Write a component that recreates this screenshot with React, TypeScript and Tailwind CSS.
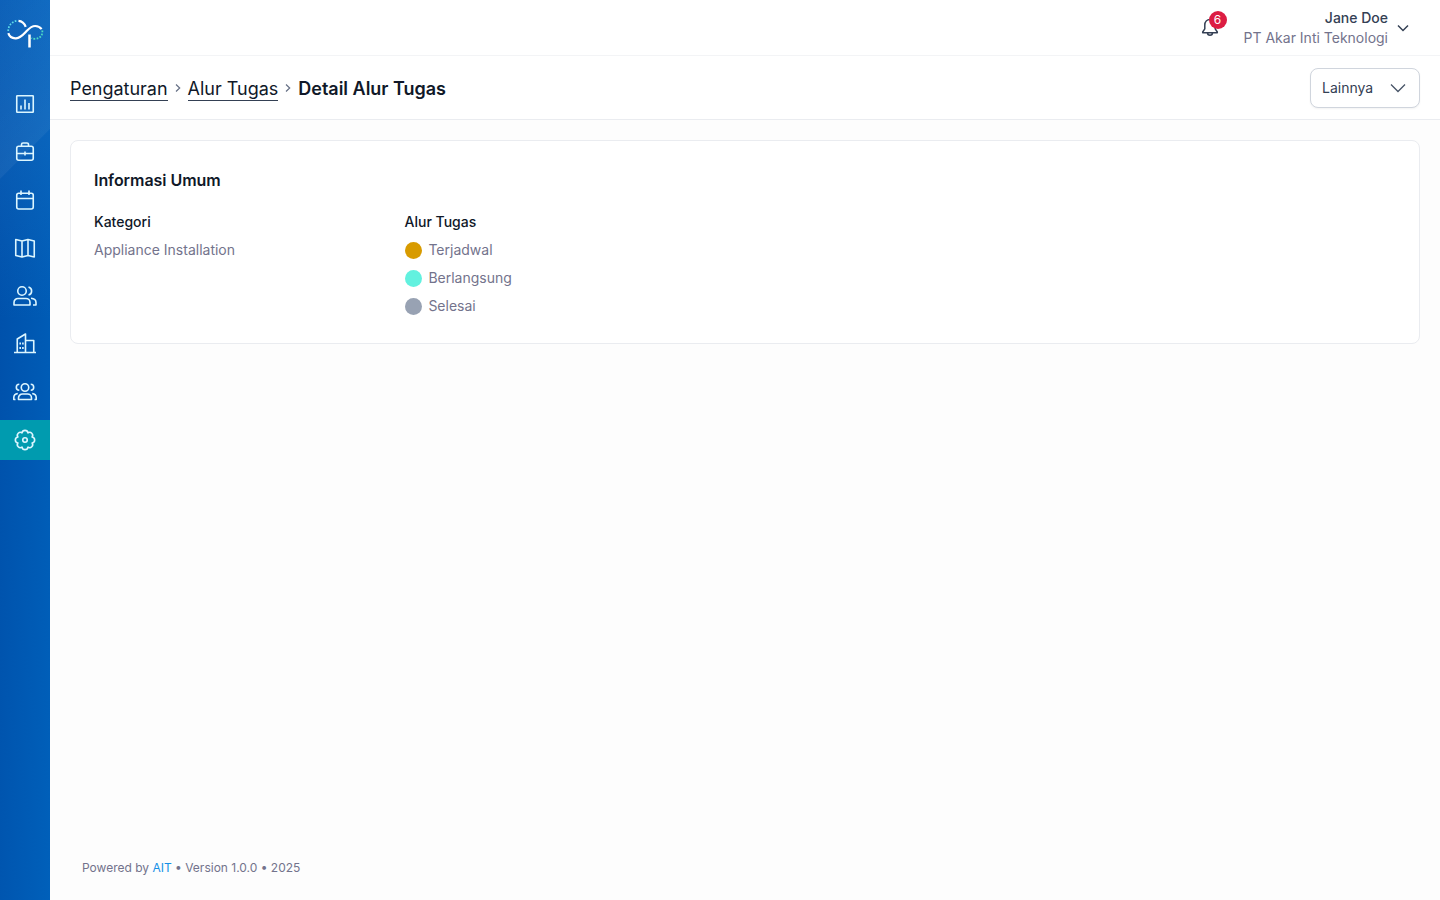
import type { ReactNode } from "react"

interface NavItem {
  id: string
  active?: boolean
  icon: ReactNode
}

const NAV_ITEMS: NavItem[] = [
  {
    id: "dashboard",
    icon: (
      <>
        <rect x="3.75" y="3.75" width="16.5" height="16.5" rx="0.5" />
        <path d="M8 13.5v4M12 7.5v10M16 11v6.5" />
      </>
    ),
  },
  {
    id: "jobs",
    icon: (
      <>
        <rect x="3.75" y="6.25" width="16.5" height="14" rx="2" />
        <path d="M8.5 6V4.5A1.5 1.5 0 0 1 10 3h4a1.5 1.5 0 0 1 1.5 1.5V6M3.75 13.5h16.5M12 11.5v4" />
      </>
    ),
  },
  {
    id: "calendar",
    icon: (
      <>
        <rect x="3.75" y="5.25" width="16.5" height="15.75" rx="2" />
        <path d="M8 2.5V7M16 2.5V7M3.75 10.5h16.5" />
      </>
    ),
  },
  {
    id: "map",
    icon: <path d="M2.75 3.5 9 5l6-1.5L21.25 5v16L15 19.5 9 21l-6.25-1.5ZM9 5v16M15 3.5v16" />,
  },
  {
    id: "customers",
    icon: (
      <>
        <circle cx="9" cy="7" r="4.25" />
        <path d="M15.5 2.9a4.25 4.25 0 0 1 0 8.2M5 14.5h8a4 4 0 0 1 4 4V21H1v-2.5a4 4 0 0 1 4-4ZM18 14.3c2.9.3 5 1.7 5 4.2V21h-3" />
      </>
    ),
  },
  {
    id: "assets",
    icon: (
      <>
        <path d="M1 20.5h22M4.25 20.5V7l8.25-5v18.5M12.5 8.5h8.25v12" />
        <path d="M7.2 10.5v2M9.9 10.5v2M7.2 15v2M9.9 15v2" />
      </>
    ),
  },
  {
    id: "teams",
    icon: (
      <>
        <circle cx="12" cy="7.5" r="3.75" />
        <path d="M9.5 14h5a4 4 0 0 1 4 4v1.5h-13V18a4 4 0 0 1 4-4Z" />
        <path d="M6.3 4.3a3 3 0 0 0 0 6M17.7 4.3a3 3 0 0 1 0 6M4.8 13.5c-2.4.4-4 1.9-4 4v2h1.7M19.2 13.5c2.4.4 4 1.9 4 4v2h-1.7" />
      </>
    ),
  },
  {
    id: "settings",
    active: true,
    icon: (
      <>
        <path d="M9.05 4.9a2.98 2.98 0 0 1 5.9 0 2.98 2.98 0 0 1 4.15 4.15 2.98 2.98 0 0 1 0 5.9 2.98 2.98 0 0 1-4.15 4.15 2.98 2.98 0 0 1-5.9 0 2.98 2.98 0 0 1-4.15-4.15 2.98 2.98 0 0 1 0-5.9 2.98 2.98 0 0 1 4.15-4.15Z" />
        <circle cx="12" cy="12" r="2.25" />
      </>
    ),
  },
]

const STEPS = [
  { name: "Terjadwal", color: "bg-[#d89b00]" },
  { name: "Berlangsung", color: "bg-[#62f1df]" },
  { name: "Selesai", color: "bg-[#98a2b3]" },
]

function Logo() {
  return (
    <svg width="50" height="36" viewBox="0 0 50 36" fill="none">
      <path d="M8.2 18c0-5.500 4-10 9.500-10.300" stroke="#5ddbe8" strokeWidth="1.7" strokeDasharray="1.7 1.4" />
      <path d="M18.5 7.8c3.4.3 5.9 2.5 7.2 6" stroke="#fff" strokeWidth="2.2" />
      <path d="M8.3 20.2c1.2 3.6 4.3 5.3 7.7 5.1 4.7-.2 7.6-4 10.9-7.5 2.6-2.8 5.3-4.8 8.3-4.8 2.6 0 4.8 1 6.4 3.2" stroke="#fff" strokeWidth="2.2" />
      <path d="M42.3 17.5c.6 5-2.6 8.3-7.3 8.3-1.5 0-2.5-.3-3.5-.9" stroke="#4cdbc4" strokeWidth="1.8" strokeDasharray="1.7 1.4" />
      <path d="M29.5 21.5v13" stroke="#fff" strokeWidth="2.5" />
    </svg>
  )
}

function Sidebar() {
  return (
    <aside className="flex w-[50px] shrink-0 flex-col bg-[linear-gradient(135deg,rgba(255,255,255,0)_0px,rgba(255,255,255,0.05)_126px,transparent_127px),linear-gradient(180deg,rgba(50,145,225,0.28)_0px,rgba(50,145,225,0.18)_140px,transparent_320px),linear-gradient(92deg,#004fa9_0%,#0060ba_100%)] pt-[13px]">
      <Logo />
      <nav className="mt-[35px] flex flex-col gap-2">
        {NAV_ITEMS.map((item) => (
          <a key={item.id} href="#" className={`flex h-10 items-center justify-center ${item.active ? "bg-[#009baf]" : ""}`}>
            <svg width="24" height="24" viewBox="0 0 24 24" fill="none" stroke="#dcf6ff" strokeWidth="1.6" strokeLinejoin="round">
              {item.icon}
            </svg>
          </a>
        ))}
      </nav>
    </aside>
  )
}

function Topbar() {
  return (
    <header className="flex h-14 items-center justify-end border-b border-[#f3f4f6] bg-white pr-[31px]">
      <button className="relative mr-[22px] h-6 w-6">
        <svg width="24" height="24" viewBox="0 0 24 24" fill="none" stroke="#344054" strokeWidth="1.5" strokeLinejoin="round">
          <path d="M12 3.5c-3 0-5.2 2.3-5.2 5.5v3.8L4.700 16v.8h14.600V16l-2.100-3.200V9c0-3.200-2.200-5.500-5.200-5.500ZM9.500 16.800a2.500 2.500 0 0 0 5 0" />
        </svg>
        <span className="absolute -top-[5px] left-[11px] flex h-[18px] w-[18px] items-center justify-center rounded-full bg-[#dc1d43] text-xs text-white">
          6
        </span>
      </button>
      <div className="text-right text-sm leading-5">
        <p className="font-medium text-[#344054]">Jane Doe</p>
        <p className="text-[#73738c]">PT Akar Inti Teknologi</p>
      </div>
      <svg className="ml-[9px]" width="12" height="12" viewBox="0 0 12 12" fill="none" stroke="#344054" strokeWidth="1.5">
        <path d="m1 3.5 5 5 5-5" />
      </svg>
    </header>
  )
}

function Separator() {
  return (
    <svg className="mx-[7px] mb-0.5" width="6" height="10" viewBox="0 0 6 10" fill="none" stroke="#667085" strokeWidth="1.2">
      <path d="m1 1.5 3.7 3.5L1 8.5" />
    </svg>
  )
}

function PageHeader() {
  return (
    <div className="flex h-16 items-center justify-between border-b border-[#eaecf0] bg-white px-5">
      <div className="flex items-center pt-0.5 text-lg tracking-[-0.015px] text-[#101828]">
        <a href="#" className="mt-0.5 border-b border-[#344054] leading-[22px]">Pengaturan</a>
        <Separator />
        <a href="#" className="mt-0.5 border-b border-[#344054] leading-[22px]">Alur Tugas</a>
        <Separator />
        <h1 className="font-semibold">Detail Alur Tugas</h1>
      </div>
      <button className="flex h-10 w-[110px] items-center justify-between rounded-lg border border-[#d0d5dd] bg-white pr-[13px] pl-[11px] text-sm text-[#344054] shadow-xs">
        Lainnya
        <svg width="16" height="16" viewBox="0 0 16 16" fill="none" stroke="#475467" strokeWidth="1.3">
          <path d="m1 4.5 7 7 7-7" />
        </svg>
      </button>
    </div>
  )
}

export default function App() {
  return (
    <div className="flex h-screen bg-[#fdfdfd] font-['Inter',sans-serif]">
      <Sidebar />
      <div className="flex min-w-0 flex-1 flex-col">
        <Topbar />
        <PageHeader />
        <main className="flex-1 p-5">
          <section className="h-[204px] rounded-lg border border-[#eaecf0] bg-white px-[23px] pt-[27px]">
            <h2 className="text-base font-semibold tracking-[-0.05px] text-[#101828]">Informasi Umum</h2>
            <div className="mt-5 flex text-sm text-[#73738c]">
              <div className="w-[310.5px] space-y-2">
                <p className="font-medium text-[#101828]">Kategori</p>
                <p>Appliance Installation</p>
              </div>
              <div className="space-y-2">
                <p className="font-medium text-[#101828]">Alur Tugas</p>
                {STEPS.map((step) => (
                  <div key={step.name} className="flex items-center gap-1.5 pl-[0.9px]">
                    <span className={`h-[17px] w-[17px] rounded-full ${step.color}`} />
                    <span>{step.name}</span>
                  </div>
                ))}
              </div>
            </div>
          </section>
        </main>
        <footer className="px-8 pb-6 text-xs text-[#73738c]">
          Powered by <a href="#" className="text-[#1590e6]">AIT</a> • Version 1.0.0 • 2025
        </footer>
      </div>
    </div>
  )
}
